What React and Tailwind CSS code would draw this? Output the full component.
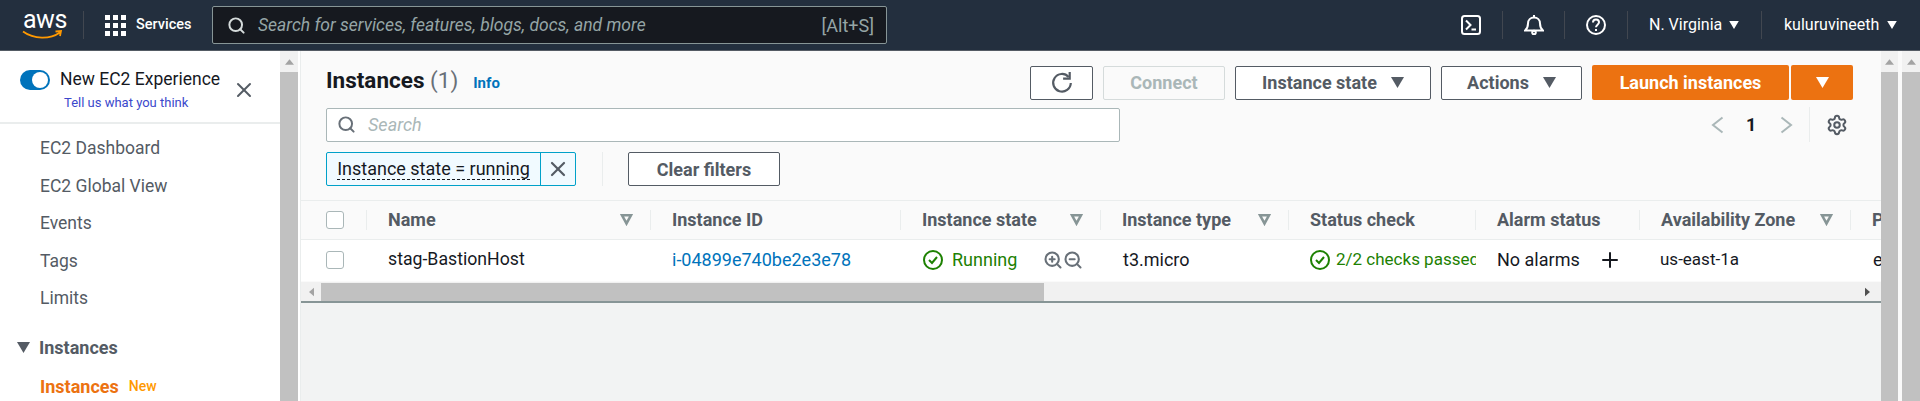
import { Search, Settings, ZoomIn, ZoomOut, X, Plus } from "lucide-react";

const COLUMNS = [
  { title: "Name", width: "w-[284px]", filter: true },
  { title: "Instance ID", width: "w-[250px]" },
  { title: "Instance state", width: "w-[200px]", filter: true },
  { title: "Instance type", width: "w-[188px]", filter: true },
  { title: "Status check", width: "w-[187px]" },
  { title: "Alarm status", width: "w-[164px]" },
  { title: "Availability Zone", width: "w-[211px]", filter: true },
  { title: "Public IPv4", width: "w-[200px]" },
];

function Caret({ className = "" }) {
  return (
    <svg viewBox="0 0 12 10" className={className} fill="currentColor">
      <path d="M0 0h12L6 10z" />
    </svg>
  );
}

function Chevron({ d, className = "" }) {
  return (
    <svg viewBox="0 0 13 18" className={`w-[13px] h-[18px] text-[#aab7b8] ${className}`} fill="none" stroke="currentColor" strokeWidth="2">
      <path d={d} />
    </svg>
  );
}

function FilterIcon() {
  return (
    <svg viewBox="0 0 13 12" className="w-[13px] h-[12px] text-[#879596] shrink-0" fill="none" stroke="currentColor" strokeWidth="2.600">
      <path d="M2 1.300h9L6.500 9.500z" />
    </svg>
  );
}

function CheckCircle() {
  return (
    <svg viewBox="0 0 20 20" className="w-5 h-5 text-[#1d8102] shrink-0" fill="none" stroke="currentColor" strokeWidth="2">
      <circle cx="10" cy="10" r="9" />
      <path d="M6 10l3 3 5-6" />
    </svg>
  );
}

function Divider() {
  return <div className="w-px h-7 bg-[#414750]" />;
}

function Checkbox() {
  return <div className="w-[18px] h-[18px] rounded-[3px] border border-[#aab7b8] bg-white" />;
}

function VerticalScrollbar({ className = "" }) {
  return (
    <div className={`flex flex-col bg-[#f1f1f1] ${className}`}>
      <div className="h-[21px] flex items-center justify-center">
        <svg viewBox="0 0 10 6" className="w-[9px] h-[6px] text-[#a3a3a3]" fill="currentColor">
          <path d="M0 6l5-6 5 6z" />
        </svg>
      </div>
      <div className="flex-1 bg-[#c1c1c1]" />
    </div>
  );
}

function OutlineButton({ children, className = "" }) {
  return (
    <div className={`h-[34px] flex items-center justify-center rounded-[2px] border border-[#545b64] bg-white text-[#545b64] font-bold text-[18px] ${className}`}>
      {children}
    </div>
  );
}

function TopBar() {
  return (
    <header className="h-[51px] bg-[#232f3e] border-b border-[#545b64] flex items-center text-white shrink-0">
      <div className="w-[83px] pl-[22px] flex flex-col items-start">
        <span className="text-[25px] leading-[18px] pl-[1px] tracking-[-0.5px]">aws</span>
        <svg viewBox="0 0 41 10" className="w-[41px] h-[10px] mt-[1px]" fill="none" stroke="#ff9900" strokeWidth="1.800">
          <path d="M1 1.500c11 8 27 8 37 1M33.500 1.500l5.500-.5-1 5" />
        </svg>
      </div>
      <div className="w-px h-7 bg-[#414750]" />
      <div className="ml-[21px] grid grid-cols-3 gap-[3px]">
        {Array.from({ length: 9 }).map((_, i) => (
          <div key={i} className="w-[5px] h-[5px] bg-white" />
        ))}
      </div>
      <span className="ml-[10px] w-[76px] text-[14.5px] font-medium">Services</span>
      <div className="w-[675px] h-[38px] rounded-[2px] border border-[#879596] bg-[#16191f] flex items-center pl-[14px] pr-[12px]">
        <Search className="w-[19px] h-[19px] text-[#d5dbdb]" strokeWidth={2.500} />
        <span className="ml-[12px] flex-1 italic text-[17.5px] text-[#95a5a6]">Search for services, features, blogs, docs, and more</span>
        <span className="text-[18px] text-[#95a5a6]">[Alt+S]</span>
      </div>
      <div className="ml-auto flex items-center">
        <svg viewBox="0 0 20 20" className="w-5 h-5" fill="none" stroke="white" strokeWidth="2">
          <rect x="1" y="1" width="18" height="18" rx="2.500" />
          <path d="M5 5.500l4.500 4.500L5 14.500M10.500 14.500h4.500" />
        </svg>
        <div className="w-[21px]" />
        <Divider />
        <div className="w-[21px]" />
        <svg viewBox="0 0 20 20" className="w-5 h-5" fill="none" stroke="white" strokeWidth="2">
          <path d="M1 15.500h18c-2.500-2-3-4-3-7 0-3.500-2.500-6-6-6s-6 2.500-6 6c0 3-.5 5-3 7z" />
          <path d="M10 0v2.500" />
          <circle cx="10" cy="17.500" r="1.800" />
        </svg>
        <div className="w-5" />
        <Divider />
        <div className="w-[21px]" />
        <svg viewBox="0 0 20 20" className="w-5 h-5" fill="none" stroke="white" strokeWidth="2">
          <circle cx="10" cy="10" r="9" />
          <path d="M7 7.500c0-1.800 1.300-3 3-3s3 1.200 3 2.800c0 2.400-3 2.400-3 5" />
          <path d="M10 14v2" />
        </svg>
        <div className="w-[21px]" />
        <Divider />
        <span className="ml-[21px] w-[72px] whitespace-nowrap text-[16px]">N. Virginia</span>
        <Caret className="ml-2 w-[10px] h-[8px]" />
        <div className="w-[22px]" />
        <Divider />
        <span className="ml-[22px] w-[94px] whitespace-nowrap text-[16px]">kuluruvineeth</span>
        <Caret className="ml-[9px] w-[10px] h-[8px]" />
        <div className="w-[23px]" />
      </div>
    </header>
  );
}

function Sidebar() {
  return (
    <aside className="w-[280px] shrink-0 bg-white flex flex-col overflow-hidden">
      <div className="h-[73px] shrink-0 border-b-2 border-[#eaeded] flex pl-[20px] pt-[15px]">
        <div className="mt-[4px] w-[30px] h-5 rounded-full bg-[#0073bb] flex items-center justify-end pr-[2px]">
          <div className="w-4 h-4 rounded-full bg-white" />
        </div>
        <div className="ml-[10px] w-[164px] flex flex-col whitespace-nowrap">
          <span className="text-[17.5px] leading-[26px] text-[#16191f]">New EC2 Experience</span>
          <span className="ml-[4px] mt-[3px] text-[13px] leading-[16px] text-[#3b48cc]">Tell us what you think</span>
        </div>
        <X className="ml-[8px] mt-[12px] w-[24px] h-[24px] text-[#545b64] shrink-0" strokeWidth={2} />
      </div>
      <nav className="pt-[6px] pl-[40px] text-[17.5px] text-[#545b64] flex flex-col">
        <span className="h-[37px] flex items-center">EC2 Dashboard</span>
        <span className="h-[38px] flex items-center">EC2 Global View</span>
        <span className="h-[37px] flex items-center">Events</span>
        <span className="h-[38px] flex items-center">Tags</span>
        <span className="h-[37px] flex items-center">Limits</span>
      </nav>
      <div className="mt-[17px] pl-[17px] h-[37px] flex items-center font-bold text-[18px] text-[#545b64]">
        <Caret className="w-[13px] h-[11px]" />
        <span className="ml-[9px]">Instances</span>
      </div>
      <div className="mt-[10px] pl-[40px] h-[40px] flex items-center text-[#ec7211]">
        <span className="font-bold text-[18px]">Instances</span>
        <span className="ml-[10px] text-[14px] font-medium text-[#ff9900]">New</span>
      </div>
    </aside>
  );
}

function ActionsPanel() {
  return (
    <div className="h-[149px] shrink-0 px-[25px] pt-[14px]">
      <div className="flex items-center h-[35px]">
        <h1 className="text-[22.5px] -mt-[3px] font-bold text-[#16191f]">
          Instances <span className="font-normal text-[#687078]">(1)</span>
        </h1>
        <span className="ml-[15px] mt-[1px] text-[15px] font-bold text-[#0073bb]">Info</span>
        <OutlineButton className="ml-auto w-[63px]">
          <svg viewBox="0 0 20 20" className="w-[22px] h-[22px]" fill="none" stroke="#545b64" strokeWidth="2">
            <path d="M16 4.500A8 8 0 1 0 18 10" />
            <path d="M17 0v6h-6" />
          </svg>
        </OutlineButton>
        <div className="ml-[10px] w-[122px] h-[34px] flex items-center justify-center rounded-[2px] border border-[#d5dbdb] font-bold text-[18px] text-[#aab7b8]">Connect</div>
        <OutlineButton className="ml-[10px] w-[196px]">
          Instance state
          <Caret className="ml-[14px] w-[13px] h-[11px]" />
        </OutlineButton>
        <OutlineButton className="ml-[10px] w-[141px]">
          Actions
          <Caret className="ml-[14px] w-[13px] h-[11px]" />
        </OutlineButton>
        <div className="ml-[10px] w-[197px] h-[35px] flex items-center justify-center rounded-[2px] bg-[#ec7211] font-bold text-[18px] text-white">Launch instances</div>
        <div className="ml-[2px] w-[62px] h-[35px] flex items-center justify-center rounded-[2px] bg-[#ec7211] text-white">
          <Caret className="w-[13px] h-[11px]" />
        </div>
        <div className="w-[3px]" />
      </div>
      <div className="mt-[7px] flex items-center h-[35px]">
        <div className="w-[794px] h-[34px] rounded-[2px] border border-[#aab7b8] bg-white flex items-center pl-[10px]">
          <Search className="w-[19px] h-[19px] text-[#687078]" strokeWidth={2.500} />
          <span className="ml-[12px] italic text-[18px] text-[#aab7b8]">Search</span>
        </div>
        <Chevron d="M11.500 1.500L2 9l9.500 7.500" className="ml-[591px]" />
        <span className="ml-[22px] w-[10px] font-bold text-[18px] text-[#16191f]">1</span>
        <Chevron d="M1.500 1.500L11 9l-9.500 7.500" className="ml-[24px]" />
        <div className="ml-[16px] w-px h-[35px] bg-[#eaeded]" />
        <Settings className="ml-[16px] w-[22px] h-[22px] text-[#545b64]" strokeWidth={2.200} />
      </div>
      <div className="mt-[10px] flex items-center">
        <div className="w-[250px] h-[34px] rounded-[2px] border border-[#00a1c9] bg-[#f1faff] flex">
          <div className="w-[213px] flex items-center justify-center">
            <span className="text-[18px] leading-[20px] text-[#16191f] border-b border-dashed border-[#16191f]">Instance state = running</span>
          </div>
          <div className="flex-1 border-l border-[#00a1c9] flex items-center justify-center">
            <X className="w-[24px] h-[24px] text-[#545b64]" strokeWidth={2.200} />
          </div>
        </div>
        <div className="ml-[26px] w-px h-[34px] bg-[#eaeded]" />
        <OutlineButton className="ml-[25px] w-[152px]">Clear filters</OutlineButton>
      </div>
    </div>
  );
}

function InstanceTable() {
  return (
    <div className="overflow-hidden">
      <div className="flex h-[40px] border-y border-[#eaeded] w-[1800px]">
        <div className="w-[66px] pl-[25px] flex items-center justify-between shrink-0">
          <Checkbox />
          <div className="w-px h-5 bg-[#eaeded]" />
        </div>
        {COLUMNS.map((col) => (
          <div key={col.title} className={`${col.width} shrink-0 pl-[21px] flex items-center text-[18px] font-bold text-[#545b64]`}>
            <div className="flex-1 flex items-center justify-between pr-[17px] -mt-[1px] whitespace-nowrap">
              <span>{col.title}</span>
              {col.filter ? <FilterIcon /> : null}
            </div>
            <div className="w-px h-5 bg-[#eaeded]" />
          </div>
        ))}
      </div>
      <div className="flex h-[41px] pb-[2px] bg-white text-[18px] text-[#16191f] w-[1800px] items-center">
        <div className="w-[66px] pl-[25px] shrink-0">
          <Checkbox />
        </div>
        <div className="w-[284px] shrink-0 pl-[21px] text-[17.7px]">stag-BastionHost</div>
        <div className="w-[250px] shrink-0 pl-[21px] text-[#0073bb]">i-04899e740be2e3e78</div>
        <div className="w-[200px] shrink-0 pl-[22px] flex items-center text-[#1d8102]">
          <CheckCircle />
          <span className="ml-[9px] w-[91px]">Running</span>
          <ZoomIn className="w-5 h-5 text-[#687078]" strokeWidth={2.500} />
          <ZoomOut className="w-5 h-5 text-[#687078]" strokeWidth={2.500} />
        </div>
        <div className="w-[188px] shrink-0 pl-[22px]">t3.micro</div>
        <div className="w-[187px] shrink-0 pl-[21px] flex items-center text-[#1d8102] text-[17px] overflow-hidden whitespace-nowrap">
          <CheckCircle />
          <span className="ml-[6px]">2/2 checks passed</span>
        </div>
        <div className="w-[164px] shrink-0 pl-[21px] flex items-center">
          <span className="w-[101px]">No alarms</span>
          <Plus className="w-6 h-6 text-[#16191f]" strokeWidth={2} />
        </div>
        <div className="w-[211px] shrink-0 pl-[20px] text-[17px]">us-east-1a</div>
        <div className="pl-[22px]">ec2</div>
      </div>
      <div className="h-[19px] mt-[1px] bg-[#f1f1f1] flex items-center">
        <div className="w-[20px] flex justify-center">
          <svg viewBox="0 0 6 10" className="w-[5px] h-[10px] text-[#a3a3a3]" fill="currentColor">
            <path d="M6 0L0 5l6 5z" />
          </svg>
        </div>
        <div className="w-[723px] h-[18px] bg-[#c1c1c1]" />
        <div className="ml-auto w-[16px]">
          <svg viewBox="0 0 6 10" className="w-[5px] h-[10px] text-[#505050]" fill="currentColor">
            <path d="M0 0l6 5-6 5z" />
          </svg>
        </div>
      </div>
      <div className="h-[2px] bg-[#879596]" />
    </div>
  );
}

export default function App() {
  return (
    <div className="h-[401px] w-[1920px] overflow-hidden flex flex-col bg-white" style={{ fontFamily: "Roboto, sans-serif" }}>
      <TopBar />
      <div className="flex flex-1 min-h-0">
        <Sidebar />
        <VerticalScrollbar className="w-[18px] shrink-0" />
        <div className="w-[2px] bg-white shrink-0" />
        <main className="w-[581px] flex-1 min-w-0 border-l border-[#eaeded] bg-[#f2f3f3] flex flex-col">
          <div className="bg-[#fafafa]">
            <ActionsPanel />
            <InstanceTable />
          </div>
        </main>
        <VerticalScrollbar className="w-[17px] shrink-0" />
        <div className="w-1 bg-[#fafafa] shrink-0" />
        <VerticalScrollbar className="w-[18px] shrink-0" />
      </div>
    </div>
  );
}
